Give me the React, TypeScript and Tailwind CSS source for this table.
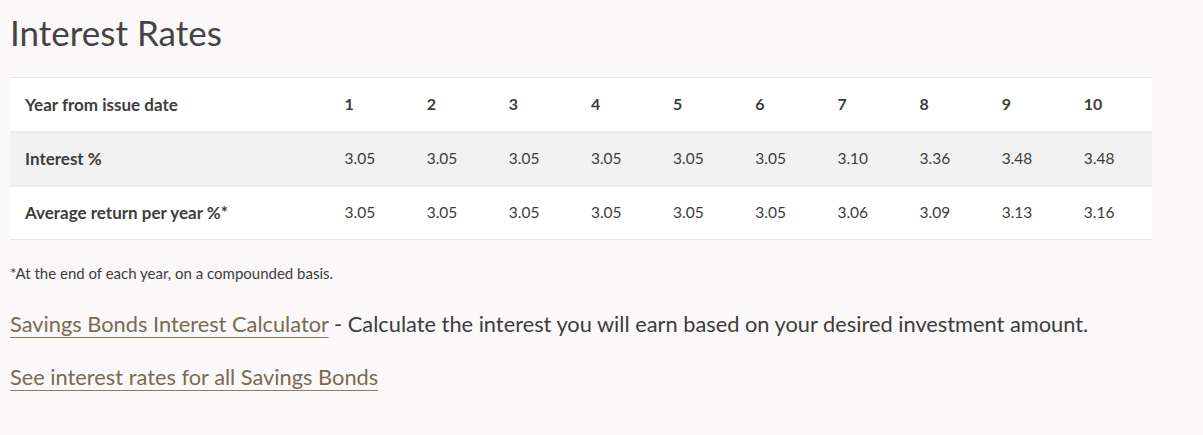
import React from "react";

const years = ["1", "2", "3", "4", "5", "6", "7", "8", "9", "10"];

const rows: { label: string; values: string[]; shaded?: boolean }[] = [
  {
    label: "Interest %",
    values: ["3.05", "3.05", "3.05", "3.05", "3.05", "3.05", "3.10", "3.36", "3.48", "3.48"],
    shaded: true,
  },
  {
    label: "Average return per year %*",
    values: ["3.05", "3.05", "3.05", "3.05", "3.05", "3.05", "3.06", "3.09", "3.13", "3.16"],
  },
];

export default function App() {
  return (
    <div className="min-h-[435px] w-[1203px] bg-[#faf8f8] px-[10px] pt-[12px] font-['Lato',sans-serif] text-[#3d3d3d]">
      <h1 className="text-[35px] leading-[40px] font-normal text-[#444]">Interest Rates</h1>

      <table className="mt-[25px] w-[1142px] table-fixed border-collapse bg-white">
        <colgroup>
          <col className="w-[320px]" />
          {years.map((y) => (
            <col key={y} className="w-[82px]" />
          ))}
        </colgroup>
        <thead>
          <tr className="h-[54px] border-t border-[#e6e6e6]">
            <th className="pl-[15px] text-left text-[17px] font-bold">Year from issue date</th>
            {years.map((y) => (
              <th key={y} className="pl-[14px] text-left text-[16px] font-bold">
                {y}
              </th>
            ))}
          </tr>
        </thead>
        <tbody>
          {rows.map((row) => (
            <tr
              key={row.label}
              className={`h-[54px] border-t-2 border-[#ececec] ${row.shaded ? "bg-[#f2f2f2]" : "bg-white"}`}
            >
              <td className="pl-[15px] text-[17px] font-bold">{row.label}</td>
              {row.values.map((v, i) => (
                <td key={i} className="pl-[14px] text-[15.5px]">
                  {v}
                </td>
              ))}
            </tr>
          ))}
          <tr className="border-t border-[#e6e6e6]" />
        </tbody>
      </table>

      <p className="mt-[22px] text-[15px] leading-[22px]">*At the end of each year, on a compounded basis.</p>

      <p className="mt-[26px] text-[21.8px] leading-[28px]">
        <a href="#" className="text-[#7a6a52] underline decoration-[#8a7a62] decoration-1 underline-offset-[5px]">
          Savings Bonds Interest Calculator
        </a>{" "}
        - Calculate the interest you will earn based on your desired investment amount.
      </p>

      <p className="mt-[25px] text-[21.8px] leading-[28px]">
        <a href="#" className="text-[#7a6a52] underline decoration-[#8a7a62] decoration-1 underline-offset-[5px]">
          See interest rates for all Savings Bonds
        </a>
      </p>
    </div>
  );
}
